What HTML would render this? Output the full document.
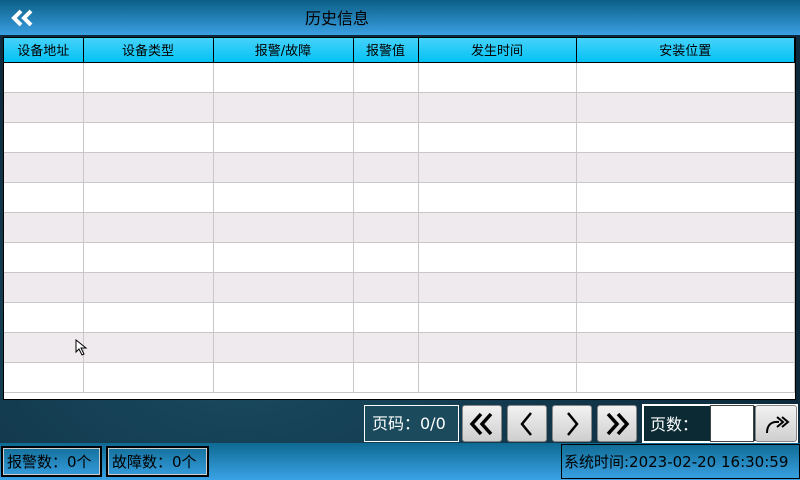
<!DOCTYPE html>
<html><head><meta charset="utf-8"><style>
*{margin:0;padding:0;box-sizing:border-box}
body{width:800px;height:480px;overflow:hidden;position:relative;font-family:"DejaVu Sans","Noto Sans CJK SC",sans-serif;background:#0e2d40}
.top{position:absolute;left:0;top:0;width:800px;height:35px;background:linear-gradient(#0b5f86,#3a9fe2)}
.title{position:absolute;left:305px;top:5px;font-size:16px;color:#000}
.mid{position:absolute;left:0;top:35px;width:800px;height:408px;background:radial-gradient(ellipse at 30% 80%,#1a4a60,#0c2a3c 70%),#0c2a3c}
.tbl{position:absolute;left:3px;top:37px;width:793px;height:363px;background:#fff;border:1px solid #000}
table{border-collapse:collapse;width:791px;table-layout:fixed}
th{height:24px;background:linear-gradient(#45d2fa,#05c2f4);font-weight:normal;font-size:13px;border-right:1px solid #000;border-bottom:1px solid #000;color:#000}
td{height:30px;border-right:1px solid #c8c8c8;border-bottom:1px solid #c8c8c8}
tr:nth-child(odd) td{background:#efeaee}
.bot{position:absolute;left:0;top:443px;width:800px;height:37px;background:linear-gradient(#0e6a92,#3aa2e6)}
.box{position:absolute;border:2px solid #000;outline:1px solid #ccc;outline-offset:-3px;font-size:15px;color:#000;padding-left:4px;line-height:28px;white-space:nowrap}
.btn{position:absolute;top:405px;width:40px;height:37px;background:linear-gradient(#f2f2f2,#cfcfcf);border-radius:3px;border:1px solid #888;display:flex;align-items:center;justify-content:center}
</style></head><body>
<div class="top"></div>
<svg style="position:absolute;left:11px;top:9px" width="24" height="18" viewBox="0 0 24 18"><path d="M10 2 L3 9 L10 16 M20 2 L13 9 L20 16" stroke="#fff" stroke-width="4" fill="none"/></svg>
<div class="title">历史信息</div>
<div class="mid"></div>
<div class="tbl"><table>
<colgroup><col style="width:79px"><col style="width:130px"><col style="width:140px"><col style="width:65px"><col style="width:158px"><col></colgroup>
<tr><th>设备地址</th><th>设备类型</th><th>报警/故障</th><th>报警值</th><th>发生时间</th><th>安装位置</th></tr>
<tr><td></td><td></td><td></td><td></td><td></td><td></td></tr>
<tr><td></td><td></td><td></td><td></td><td></td><td></td></tr>
<tr><td></td><td></td><td></td><td></td><td></td><td></td></tr>
<tr><td></td><td></td><td></td><td></td><td></td><td></td></tr>
<tr><td></td><td></td><td></td><td></td><td></td><td></td></tr>
<tr><td></td><td></td><td></td><td></td><td></td><td></td></tr>
<tr><td></td><td></td><td></td><td></td><td></td><td></td></tr>
<tr><td></td><td></td><td></td><td></td><td></td><td></td></tr>
<tr><td></td><td></td><td></td><td></td><td></td><td></td></tr>
<tr><td></td><td></td><td></td><td></td><td></td><td></td></tr>
<tr><td></td><td></td><td></td><td></td><td></td><td></td></tr>
</table></div>
<svg style="position:absolute;left:75px;top:339px" width="16" height="18"><path d="M1 1 L1 13 L4 10 L7 16 L9 15 L6 9 L11 9 Z" fill="#fff" stroke="#000"/></svg>
<div style="position:absolute;left:364px;top:405px;width:95px;height:37px;border:1px solid #fff;color:#fff;font-size:16px;line-height:35px;padding-left:7px;background:#1a4a5c;white-space:nowrap">页码：0/0</div>
<div class="btn" style="left:462px"><svg width="30" height="26"><path d="M14 3 L5 13 L14 23 M24 3 L15 13 L24 23" stroke="#000" stroke-width="3.5" fill="none"/></svg></div>
<div class="btn" style="left:507px"><svg width="30" height="26"><path d="M19 2 L10 13 L19 24" stroke="#000" stroke-width="2.5" fill="none"/></svg></div>
<div class="btn" style="left:552px"><svg width="30" height="26"><path d="M11 2 L20 13 L11 24" stroke="#000" stroke-width="2.5" fill="none"/></svg></div>
<div class="btn" style="left:597px"><svg width="30" height="26"><path d="M6 3 L15 13 L6 23 M16 3 L25 13 L16 23" stroke="#000" stroke-width="3.5" fill="none"/></svg></div>
<div style="position:absolute;left:642px;top:404px;width:156px;height:39px;border:2px solid #fff;background:#0c2a34"></div>
<div style="position:absolute;left:650px;top:411px;color:#fff;font-size:16px">页数：</div>
<div style="position:absolute;left:710px;top:405px;width:44px;height:37px;background:#fff;border:1px solid #444"></div>
<div class="btn" style="left:755px;width:42px"><svg width="30" height="26"><path d="M6 22 Q6 10 18 11" stroke="#000" stroke-width="2" fill="none"/><path d="M16 6 L22 11 L16 16 M21 6 L27 11 L21 16" stroke="#000" stroke-width="2" fill="none"/></svg></div>
<div class="bot"></div>
<div class="box" style="left:1px;top:446px;width:101px;height:31px">报警数：0个</div>
<div class="box" style="left:106px;top:446px;width:103px;height:31px">故障数：0个</div>
<div style="position:absolute;left:561px;top:444px;width:239px;height:35px;border:1px solid #000;font-size:15px;line-height:34px;padding-left:2px;color:#000;white-space:nowrap;overflow:hidden">系统时间:2023-02-20 16:30:59</div>
</body></html>
